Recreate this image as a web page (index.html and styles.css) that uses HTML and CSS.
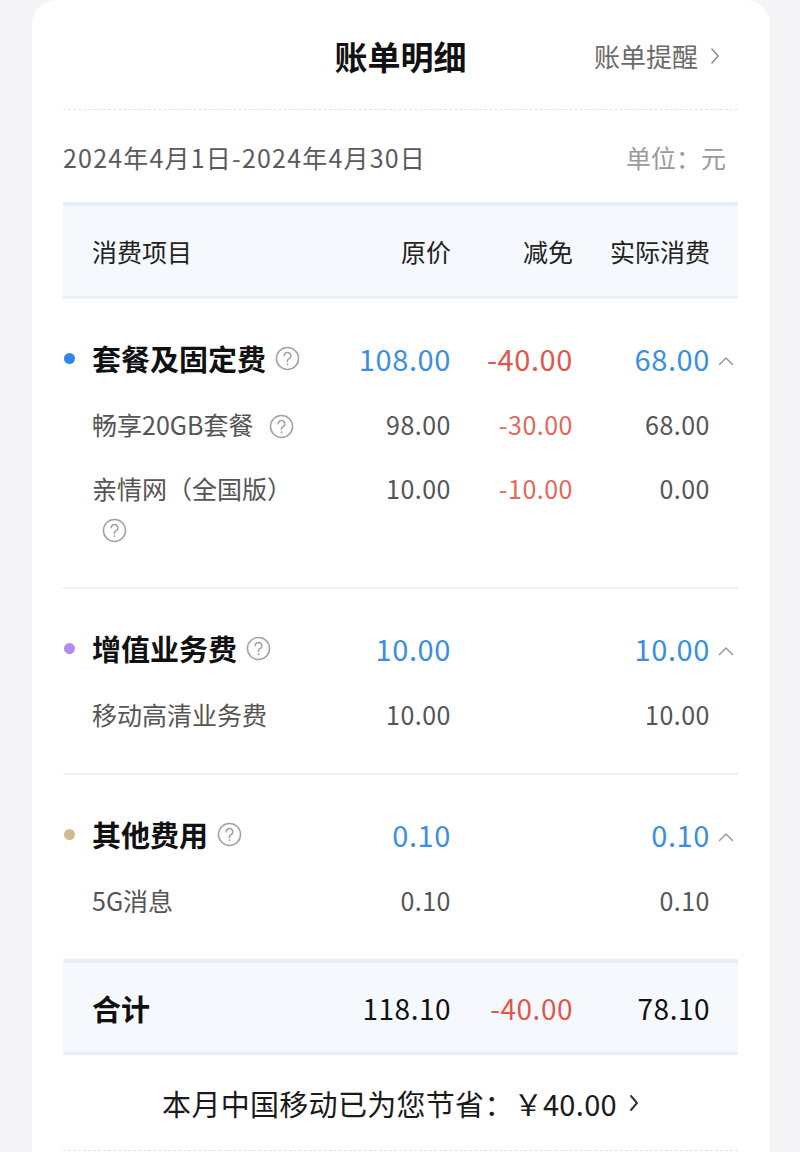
FILE: index.html
```html
<!DOCTYPE html>
<html lang="zh-CN">
<head>
<meta charset="utf-8">
<title>账单明细</title>
<link rel="stylesheet" href="styles.css">
</head>
<body>
<div class="card">
  <header class="top">
    <h1 class="title">账单明细</h1>
    <a class="remind">账单提醒 <svg class="chev-r" viewBox="0 0 10 18" width="10" height="18"><polyline points="2,2 8,9 2,16" fill="none" stroke="#8a8a8a" stroke-width="1.5" stroke-linecap="round" stroke-linejoin="round"/></svg></a>
  </header>
  <div class="daterow">
    <span class="date">2024年4月1日-2024年4月30日</span>
    <span class="unit">单位：元</span>
  </div>

  <div class="band head grid">
    <span></span>
    <span class="name">消费项目</span>
    <span class="num">原价</span>
    <span class="num">减免</span>
    <span class="num">实际消费</span>
    <span></span>
  </div>

  <section class="group">
    <div class="grid grow">
      <span class="dot blue"></span>
      <span class="name gname">套餐及固定费<svg class="q" viewBox="0 0 26 26" width="25" height="25"><circle cx="13" cy="13" r="11.5" fill="none" stroke="#a3a3a3" stroke-width="1.6"/><path d="M9.6 10.2a3.4 3.4 0 1 1 4.6 3.2c-.8.4-1.2 1-1.2 1.9v.8" fill="none" stroke="#a3a3a3" stroke-width="1.6" stroke-linecap="round"/><circle cx="13" cy="19" r="1" fill="#a3a3a3"/></svg></span>
      <span class="num gnum blue-t">108.00</span>
      <span class="num gnum red-t">-40.00</span>
      <span class="num gnum blue-t">68.00</span>
      <span class="up"><svg viewBox="0 0 16 10" width="16" height="10"><polyline points="1.5,8.5 8,2 14.5,8.5" fill="none" stroke="#9a9a9a" stroke-width="1.5" stroke-linecap="round" stroke-linejoin="round"/></svg></span>
    </div>
    <div class="grid srow">
      <span></span>
      <span class="sname">畅享20GB套餐 <svg class="qs" viewBox="0 0 26 26" width="25" height="25"><circle cx="13" cy="13" r="11.5" fill="none" stroke="#a3a3a3" stroke-width="1.6"/><path d="M9.6 10.2a3.4 3.4 0 1 1 4.6 3.2c-.8.4-1.2 1-1.2 1.9v.8" fill="none" stroke="#a3a3a3" stroke-width="1.6" stroke-linecap="round"/><circle cx="13" cy="19" r="1" fill="#a3a3a3"/></svg></span>
      <span class="num snum">98.00</span>
      <span class="num snum red-s">-30.00</span>
      <span class="num snum">68.00</span>
      <span></span>
    </div>
    <div class="grid srow">
      <span></span>
      <span class="sname">亲情网（全国版） <svg class="qs" viewBox="0 0 26 26" width="25" height="25"><circle cx="13" cy="13" r="11.5" fill="none" stroke="#a3a3a3" stroke-width="1.6"/><path d="M9.6 10.2a3.4 3.4 0 1 1 4.6 3.2c-.8.4-1.2 1-1.2 1.9v.8" fill="none" stroke="#a3a3a3" stroke-width="1.6" stroke-linecap="round"/><circle cx="13" cy="19" r="1" fill="#a3a3a3"/></svg></span>
      <span class="num snum">10.00</span>
      <span class="num snum red-s">-10.00</span>
      <span class="num snum">0.00</span>
      <span></span>
    </div>
  </section>

  <section class="group">
    <div class="grid grow">
      <span class="dot purple"></span>
      <span class="name gname">增值业务费<svg class="q" viewBox="0 0 26 26" width="25" height="25"><circle cx="13" cy="13" r="11.5" fill="none" stroke="#a3a3a3" stroke-width="1.6"/><path d="M9.6 10.2a3.4 3.4 0 1 1 4.6 3.2c-.8.4-1.2 1-1.2 1.9v.8" fill="none" stroke="#a3a3a3" stroke-width="1.6" stroke-linecap="round"/><circle cx="13" cy="19" r="1" fill="#a3a3a3"/></svg></span>
      <span class="num gnum blue-t">10.00</span>
      <span class="num gnum"></span>
      <span class="num gnum blue-t">10.00</span>
      <span class="up"><svg viewBox="0 0 16 10" width="16" height="10"><polyline points="1.5,8.5 8,2 14.5,8.5" fill="none" stroke="#9a9a9a" stroke-width="1.5" stroke-linecap="round" stroke-linejoin="round"/></svg></span>
    </div>
    <div class="grid srow">
      <span></span>
      <span class="sname">移动高清业务费</span>
      <span class="num snum">10.00</span>
      <span class="num snum"></span>
      <span class="num snum">10.00</span>
      <span></span>
    </div>
  </section>

  <section class="group last">
    <div class="grid grow">
      <span class="dot tan"></span>
      <span class="name gname">其他费用<svg class="q" viewBox="0 0 26 26" width="25" height="25"><circle cx="13" cy="13" r="11.5" fill="none" stroke="#a3a3a3" stroke-width="1.6"/><path d="M9.6 10.2a3.4 3.4 0 1 1 4.6 3.2c-.8.4-1.2 1-1.2 1.9v.8" fill="none" stroke="#a3a3a3" stroke-width="1.6" stroke-linecap="round"/><circle cx="13" cy="19" r="1" fill="#a3a3a3"/></svg></span>
      <span class="num gnum blue-t">0.10</span>
      <span class="num gnum"></span>
      <span class="num gnum blue-t">0.10</span>
      <span class="up"><svg viewBox="0 0 16 10" width="16" height="10"><polyline points="1.5,8.5 8,2 14.5,8.5" fill="none" stroke="#9a9a9a" stroke-width="1.5" stroke-linecap="round" stroke-linejoin="round"/></svg></span>
    </div>
    <div class="grid srow">
      <span></span>
      <span class="sname">5G消息</span>
      <span class="num snum">0.10</span>
      <span class="num snum"></span>
      <span class="num snum">0.10</span>
      <span></span>
    </div>
  </section>

  <div class="band total grid">
    <span></span>
    <span class="name tname">合计</span>
    <span class="num tnum">118.10</span>
    <span class="num tnum red-t">-40.00</span>
    <span class="num tnum">78.10</span>
    <span></span>
  </div>

  <div class="save">本月中国移动已为您节省：￥40.00 <svg class="chev-s" viewBox="0 0 10 18" width="10" height="18"><polyline points="2,2 8,9 2,16" fill="none" stroke="#333" stroke-width="2" stroke-linecap="round" stroke-linejoin="round"/></svg></div>
</div>
</body>
</html>
```

FILE: styles.css
```css
* { box-sizing: border-box; }
html, body {
  margin: 0;
  padding: 0;
  background: #f4f4f6;
  font-family: "Noto Sans CJK SC", "Noto Sans", sans-serif;
}
.card {
  margin-left: 32px;
  width: 738px;
  min-height: 1152px;
  background: #ffffff;
  border-radius: 24px 24px 0 0;
  padding: 0 32px 0 31px;
}
.top {
  height: 110px;
  border-bottom: 1px dashed #e2e2e2;
  display: flex;
  align-items: center;
  justify-content: center;
  position: relative;
}
.title {
  margin: 0;
  font-size: 33px;
  font-weight: 700;
  color: #111;
  line-height: 1;
  padding-top: 4px;
}
.remind {
  position: absolute;
  right: 18px;
  top: 39px;
  font-size: 26px;
  color: #6a6a6a;
  display: flex;
  align-items: center;
  gap: 12px;
  line-height: 34px;
}
.daterow {
  height: 92px;
  display: flex;
  align-items: center;
  justify-content: space-between;
  font-size: 25px;
  padding-top: 2px;
}
.date { color: #5a5a5a; letter-spacing: 1.2px; }
.unit { color: #9a9a9a; padding-right: 12px; }

.grid {
  display: grid;
  grid-template-columns: 29px 215px 144px 122px 137px 28px;
  align-items: center;
}
.band {
  background: #f5f9fe;
  border-top: 4px solid #e7f0fa;
  border-bottom: 3px solid #e7f0fa;
}
.head {
  height: 97px;
  font-size: 25px;
  color: #222;
}
.num { text-align: right; white-space: nowrap; }
.name { display: flex; align-items: center; flex-wrap: wrap; }

.group {
  padding: 37px 0 39px;
  border-bottom: 2px solid #f0f0f0;
}
.group.last { border-bottom: none; }
.grow { height: 44px; }
.dot {
  width: 11px;
  height: 11px;
  border-radius: 50%;
  margin-left: 1px;
}
.dot.blue { background: #2f86ea; }
.dot.purple { background: #b38cf0; }
.dot.tan { background: #d2b98e; }
.gname {
  font-size: 29px;
  font-weight: 700;
  color: #111;
}
.q { margin-left: 9px; flex: none; }
.gnum { font-size: 29px; letter-spacing: 0.6px; }
.up { display: flex; justify-content: flex-end; padding-right: 4px; padding-top: 6px; }

.srow {
  margin-top: 24px;
  align-items: start;
  line-height: 40px;
}
.sname {
  font-size: 25px;
  color: #555;
}
.qs { vertical-align: middle; margin-left: 10px; position: relative; top: -2px; }
.snum { font-size: 25px; color: #555; letter-spacing: 0.5px; }

.blue-t { color: #3b8fe0; }
.red-t { color: #e0574a; }
.snum.red-s { color: #e2685a; }

.total {
  height: 96px;
}
.tname { font-size: 29px; font-weight: 700; color: #111; }
.tnum { font-size: 28px; color: #111; letter-spacing: 0.5px; }
.tnum.red-t { color: #e0574a; }

.save {
  height: 96px;
  border-bottom: 1px dashed #e2e2e2;
  display: flex;
  align-items: center;
  justify-content: center;
  font-size: 29px;
  color: #1a1a1a;
  gap: 4px;
  letter-spacing: 0.3px;
}
.chev-s { margin-left: 8px; }
```
